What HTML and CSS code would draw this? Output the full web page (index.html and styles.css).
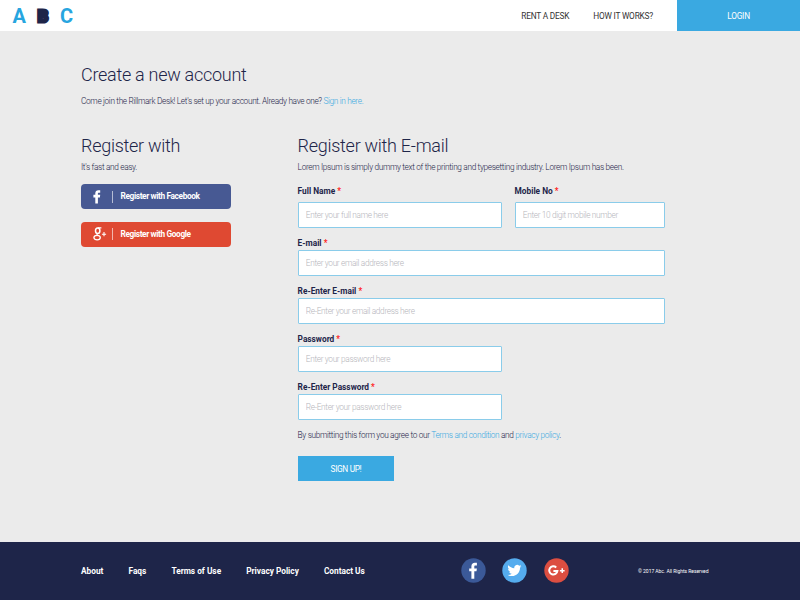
FILE: index.html
```html
<!DOCTYPE html>
<html lang="en">
<head>
<meta charset="utf-8">
<title>Create a new account</title>
<link rel="stylesheet" href="styles.css">
</head>
<body>
<header class="header">
  <div class="logo"><span>A</span><span class="logo-b">B</span><span class="logo-c">C</span></div>
  <nav class="nav">
    <a class="nav-rent">RENT A DESK</a>
    <a class="nav-how">HOW IT WORKS?</a>
    <a class="login">LOGIN</a>
  </nav>
</header>
<main class="main">
  <h1>Create a new account</h1>
  <p class="intro">Come join the Rillmark Desk! Let's set up your account. Already have one? <a>Sign in here.</a></p>
  <div class="columns">
    <section class="social">
      <h2>Register with</h2>
      <p class="easy">It's fast and easy.</p>
      <button class="btn facebook">
        <svg class="btn-icon" viewBox="0 0 16 16"><path fill="#fff" transform="translate(-3 0)" d="M6.3 14.4V8.4H4.4V5.8h1.9V4.3c0-2 1.2-3 3-3h1.9v2.5H9.9c-.8 0-1 .4-1 1v1h2.3l-.3 2.6h-2v6z"/></svg>
        <span>Register with Facebook</span>
      </button>
      <button class="btn google">
        <svg class="btn-icon" viewBox="0 0 16 16"><g fill="none" stroke="#fff"><ellipse cx="5.7" cy="4.8" rx="2.2" ry="2.8" stroke-width="1.5"/><ellipse cx="5.1" cy="11.6" rx="3.2" ry="2.3" stroke-width="1.3"/><path stroke-width="1.1" d="M5.8 1.9h3.6M5.6 7.6c-1.4 1-.4 1.5.5 2.1M9.9 8.2h4.2M12 6.1v4.2"/></g></svg>
        <span>Register with Google</span>
      </button>
    </section>
    <form class="form">
      <h2 class="mail-title">Register with E-mail</h2>
      <p class="lorem">Lorem Ipsum is simply dummy text of the printing and typesetting industry. Lorem Ipsum has been.</p>
      <div class="row">
        <div class="field half"><label>Full Name <i>*</i></label><input type="text" placeholder="Enter your full name here"></div>
        <div class="field mobile"><label>Mobile No <i>*</i></label><input type="text" placeholder="Enter 10 digit mobile number"></div>
      </div>
      <div class="field"><label>E-mail <i>*</i></label><input type="text" placeholder="Enter your email address here"></div>
      <div class="field"><label>Re-Enter E-mail <i>*</i></label><input type="text" placeholder="Re-Enter your email address here"></div>
      <div class="field half"><label>Password <i>*</i></label><input type="text" placeholder="Enter your password here"></div>
      <div class="field half"><label>Re-Enter Password <i>*</i></label><input type="text" placeholder="Re-Enter your password here"></div>
      <p class="terms">By submitting this form you agree to our <a>Terms and condition</a> and <a>privacy policy</a>.</p>
      <button class="signup" type="button">SIGN UP!</button>
    </form>
  </div>
</main>
<footer class="footer">
  <nav class="links"><a>About</a><a class="faqs">Faqs</a><a>Terms of Use</a><a>Privacy Policy</a><a>Contact Us</a></nav>
  <div class="icons">
    <svg viewBox="0 0 25 25"><circle cx="12.5" cy="12.5" r="12.2" fill="#3b5998"/><path fill="#fff" d="M10.4 20.7v-7.4H8.2v-2.9h2.2V8.3c0-2.3 1.4-3.5 3.4-3.5h2.1v2.6h-1.4c-1 0-1.2.5-1.2 1.2v1.8h2.6l-.4 2.9h-2.2v7.4z"/></svg>
    <svg viewBox="0 0 25 25"><circle cx="12.5" cy="12.5" r="12.2" fill="#55acee"/><path fill="#fff" transform="translate(5.5 5.5) scale(.58)" d="M23.95 4.57a10 10 0 0 1-2.82.78 4.96 4.96 0 0 0 2.16-2.73c-.95.56-2 .96-3.13 1.19a4.92 4.92 0 0 0-8.38 4.48C7.69 8.1 4.07 6.13 1.64 3.16a4.92 4.92 0 0 0 1.52 6.57 4.9 4.9 0 0 1-2.23-.61v.06a4.92 4.92 0 0 0 3.95 4.83 5 5 0 0 1-2.21.08 4.94 4.94 0 0 0 4.6 3.42A9.87 9.87 0 0 1 0 19.54a13.99 13.99 0 0 0 7.55 2.21c9.05 0 14-7.5 14-13.98v-.64a9.94 9.94 0 0 0 2.4-2.56z"/></svg>
    <svg viewBox="0 0 25 25"><circle cx="12.5" cy="12.5" r="12.2" fill="#dc4e41"/><path fill="none" stroke="#fff" stroke-width="2" d="M12.2 9.5A4.1 4.1 0 1 0 13.4 12.9H9.4"/><path stroke="#fff" stroke-width="1.5" d="M15.9 12.7h4.7M18.25 10.35v4.7"/></svg>
  </div>
  <small class="copy">© 2017 Abc. All Rights Reserved</small>
</footer>
</body>
</html>
```
FILE: styles.css
```css
* { box-sizing: border-box; margin: 0; padding: 0; }
body { width: 800px; height: 600px; overflow: hidden; background: #ebebeb; font-family: Roboto, "Liberation Sans", sans-serif; font-size: 8.3px; letter-spacing: -.34px; color: #1e2549; display: flex; flex-direction: column; }
a { white-space: nowrap; }
button, input { font: inherit; letter-spacing: inherit; border: 0; }

.header { height: 31px; background: #fff; display: flex; justify-content: space-between; }
.logo { display: flex; padding-left: 12.5px; font-size: 20px; line-height: 32px; letter-spacing: 0; font-weight: 700; color: #27a5df; }
.logo-b { margin-left: 11.5px; width: 13.5px; color: #1e2549; -webkit-text-stroke: 3px #1e2549; font-size: 17px; }
.logo-c { margin-left: 9px; }
.nav { display: flex; line-height: 32px; letter-spacing: -.2px; color: #333; }
.nav-rent { margin-right: 24px; }
.nav-how { margin-right: 24px; }
.login { width: 123px; background: #3aa9e1; color: #fff; text-align: center; }

.main { flex: 1; padding: 32px 0 0 81px; }
h1, h2 { font-weight: 300; font-size: 18px; letter-spacing: -.28px; line-height: 24px; white-space: nowrap; }
p { font-weight: 300; line-height: 12px; white-space: nowrap; }
p a { color: #3aa9e1; }
.intro { margin-top: 8px; }
.columns { display: flex; margin-top: 27px; }
.social { width: 216.6px; }
.easy, .lorem { margin-top: 3px; }

.btn { display: flex; align-items: center; width: 150px; height: 25px; border-radius: 4px; color: #fff; font-weight: 700; letter-spacing: -.37px; }
.btn span { margin-left: 8px; line-height: 25px; }
.btn-icon { width: 24px; height: 16px; margin-left: 7px; }
.btn-icon + span::before { content: ""; display: inline-block; width: 1px; height: 12px; margin-left: -8px; margin-right: 7.5px; vertical-align: middle; background: rgba(255, 255, 255, .6); }
.facebook { margin-top: 11px; background: #475993; }
.google { margin-top: 12.5px; background: #df4932; }

.form { width: 367.5px; }
.row { display: flex; justify-content: space-between; margin-top: 12px; }
.field { margin-top: 9.5px; }
.row .field { margin: 0; }
.half { width: 204.6px; }
.mobile { width: 150.5px; }
.field label { display: block; letter-spacing: 0; font-weight: 700; line-height: 12px; }
.field i { font-style: normal; color: #f22; }
.field input { display: block; width: 100%; height: 25.5px; margin-top: 1px; padding: 0 7.2px; background: #fff; border: 1px solid #8accea; border-radius: 1px; font-weight: 300; }
.row .field input { margin-top: 5px; }
.field input::placeholder { color: #b5b5bb; opacity: 1; }
.terms { margin-top: 9.5px; }
.signup { display: block; width: 96px; height: 25px; margin: 15px 0 0 .4px; background: #3aa9e1; color: #fff; }

.footer { height: 58px; background: #1e2549; color: #fff; display: flex; align-items: center; padding: 0 0 1px 81px; }
.links { display: flex; gap: 25.1px; width: 379.5px; letter-spacing: 0; font-weight: 700; }
.icons { display: flex; gap: 16.5px; width: 177.5px; }
.icons svg { width: 25px; height: 25px; }
.copy { font-size: 5px; letter-spacing: -.04px; white-space: nowrap; }
```
